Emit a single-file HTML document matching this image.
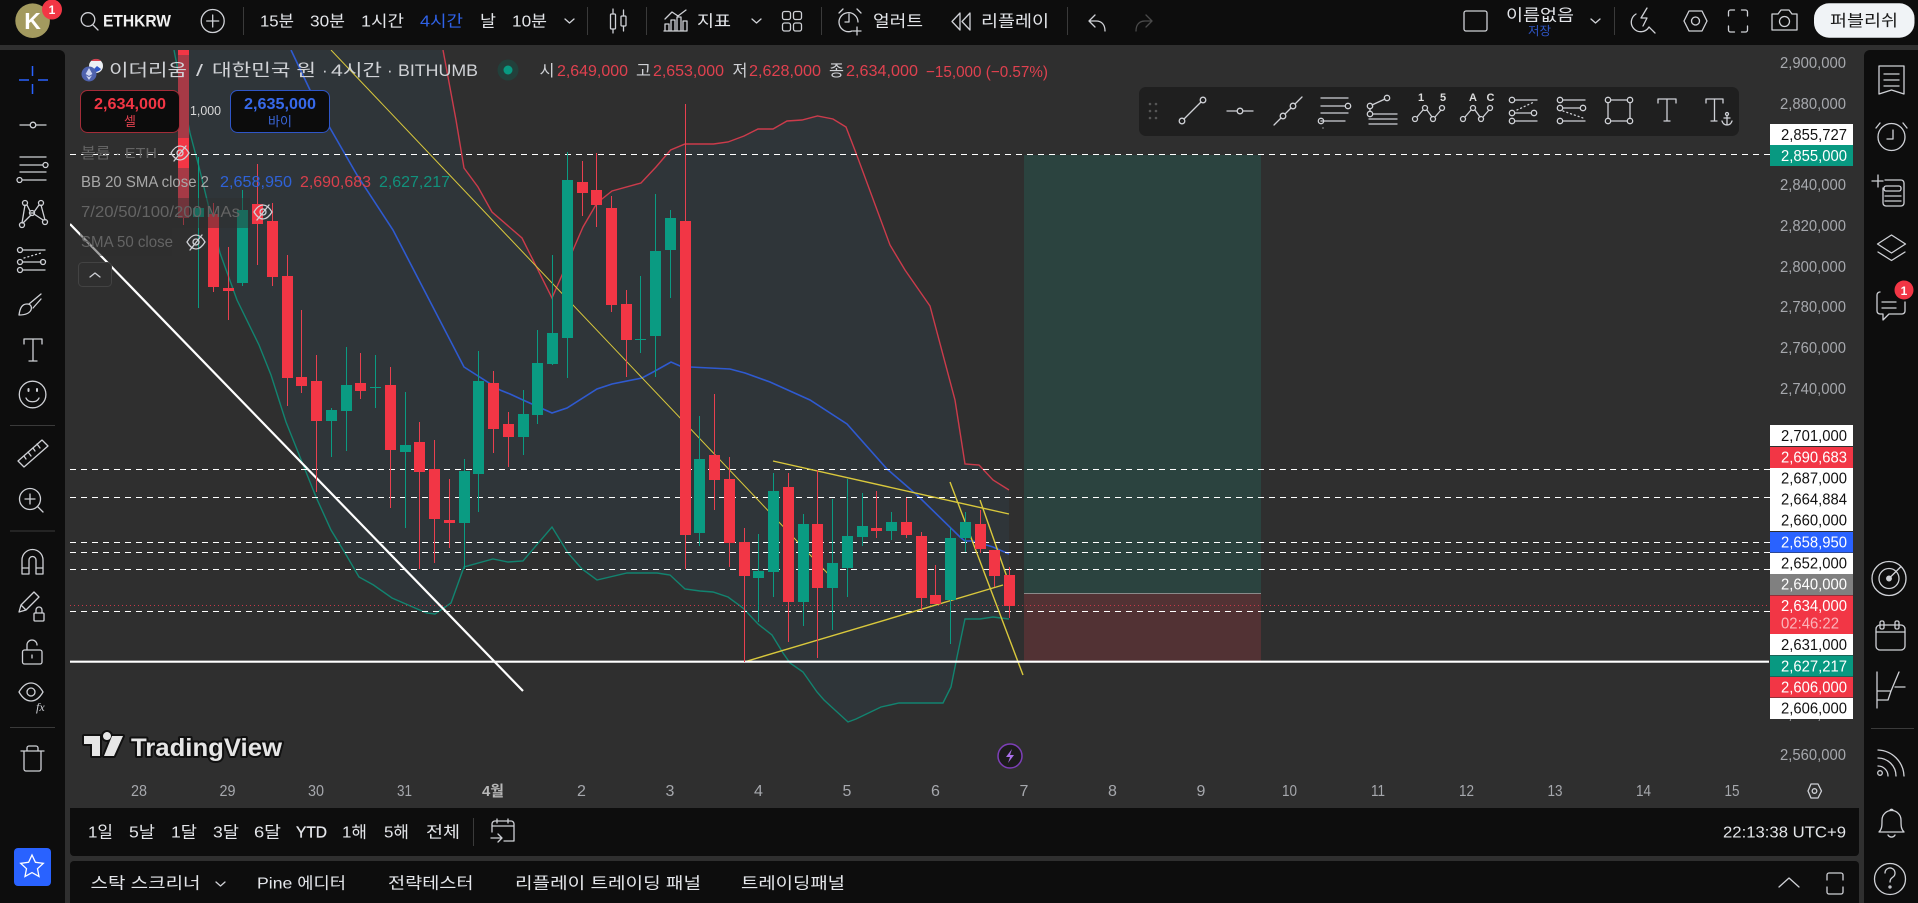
<!DOCTYPE html>
<html lang="ko"><head><meta charset="utf-8"><title>ETHKRW</title>
<style>
html,body{margin:0;padding:0;background:#2f2f2f;width:1918px;height:903px;overflow:hidden}
svg{display:block}
text{font-family:"Liberation Sans","Noto Sans CJK KR",sans-serif;white-space:pre}
.i{fill:none;stroke:#cfd1d6;stroke-width:1.3;stroke-linecap:round;stroke-linejoin:round}
.t{fill:#e4e6ea;font-size:16px}
.ax{fill:#a6a8ad;font-size:16px}
.lb{font-size:16px}
.d{stroke:#fff;stroke-width:1;stroke-dasharray:6 5;fill:none}
</style></head><body>
<svg width="1918" height="903" viewBox="0 0 1918 903" xmlns="http://www.w3.org/2000/svg">
<rect width="1918" height="903" fill="#2f2f2f"/>
<!-- position tool -->
<rect x="1024" y="155" width="237" height="438" fill="#2b433f"/>
<rect x="1024" y="593" width="237" height="68" fill="#523234"/>
<path d="M1024 593.5H1261" stroke="#8a8a8a"/>
<!-- BB fill -->
<clipPath id="cp"><rect x="70" y="50" width="1700" height="758"/></clipPath>
<g clip-path="url(#cp)">
<path fill="#2f3539" d="M174 50L443 50L456 120L464 168L478 187L492 212L522 238L552 298L573 250L583 227L597 203L612 191L641 183L656 167L670.6 150L685 144L713.5 144L728 142L744 136L758 129L773 129L787 121L802 120L817.5 116L833 119L846 127L856 153L890 245L905 270L930 306L955 400L965 464L979 465L993 480L1009 490L1009 619L993 617L980 619L965 619L957 657L951 687L943 703L899 703L881 707L856 719L848 722L824 700L817 692L803 672L790 663L783 653L772 635L758 624L743 608L728 597L713 592L700 591L685 589L670 575L657 573L627 573L597 580L582 569L568 553L552 527L523 561L508 562L493 559L464 567L451 603L435 614L426.5 613L392 598L373.5 585L359 577L345 553L331 530L316 497L286 422L271 375L259 345L237 300L220 253L199 167L190 133Z"/>
<!-- BB lines -->
<path fill="none" stroke="#cc3b4b" stroke-width="1.4" d="M443 50L456 120L464 168L478 187L492 212L522 238L552 298L573 250L583 227L597 203L612 191L641 183L656 167L670.6 150L685 144L713.5 144L728 142L744 136L758 129L773 129L787 121L802 120L817.5 116L833 119L846 127L856 153L890 245L905 270L930 306L955 400L965 464L979 465L993 480L1009 490"/>
<path fill="none" stroke="#2f5ad0" stroke-width="1.6" d="M291 50L310 90L330 128L357 175L393 230L464 367L500 390L510 394L523 400L552 413L567 408L597 389L612 384L642 378L655 371L671 362L680 366L690 367L730 369L745 373L770 382L790 391L810 400L847 424L887 469L917 495L960 537L965 541L973 541L993 547L1009 554"/>
<path fill="none" stroke="#128470" stroke-width="1.4" d="M174 50L190 133L199 167L220 253L237 300L259 345L271 375L286 422L316 497L331 530L345 553L359 577L373.5 585L392 598L426.5 613L435 614L451 603L464 567L493 559L508 562L523 561L552 527L568 553L582 569L597 580L627 573L640 573L657 573L670 575L685 589L700 591L713 592L728 597L743 608L758 624L772 635L783 653L790 663L803 672L817 692L824 700L848 722L856 719L881 707L899 703L943 703L951 687L957 657L965 619L980 619L993 617L1009 619"/>
<!-- dashes -->
<path class="d" d="M70 154.5H1770M70 469.5H1770M70 497.5H1770M70 542.5H1770M70 552.5H1770M70 569.5H1770M70 611.5H1770"/>
<path d="M70 605.5H1770" stroke="#c8394a" stroke-dasharray="1 3" fill="none"/>
<!-- yellow -->
<path fill="none" stroke="#d9c83c" stroke-width="1" d="M331 50L832 578"/>
<path fill="none" stroke="#d9c83c" stroke-width="1.4" d="M773 461L1009 514M744 662L1003 585M950 482L1023 675M980 500L1008 580"/>
<!-- white -->
<path fill="none" stroke="#fff" stroke-width="2.2" d="M70 224L523 691"/>
<path fill="none" stroke="#fff" stroke-width="2.2" d="M70 661.7H1769"/>
<!-- candles -->
<path fill="none" stroke="#0a9b82" d="M198.5 157V308M242.5 190V286M331.5 408V457M346.5 347V451M375.5 355V408M405.5 392V528M464.5 459V569M478.5 351V512M523.5 390V455M537.5 330V424M552.5 255V365M567.5 152V378M640.5 276V353M655.5 194V377M670.5 210V298M699.5 416V546M758.5 534V622M773.5 473V597M803.5 514V626M832.5 499V630M847.5 479V597M862.5 493V546M891.5 512V540M950.5 528V644M965.5 512V552"/>
<path fill="none" stroke="#e8404f" d="M213.5 203V292M228.5 247V320M257.5 164V265M272.5 203V286M287.5 255V406M301.5 310V393M316.5 355V492M360.5 353V399M390.5 367V508M419.5 422V569M434.5 440V563M449.5 479V548M493.5 371V453M508.5 412V467M582.5 161V216M596.5 153V227M611.5 196V312M626.5 290V377M685.5 104V569M714.5 394V510M729.5 457V567M744.5 528V662M788.5 473V642M817.5 470V658M876.5 491V538M906.5 498V538M921.5 532V611M935.5 565V604M980.5 510V553M994.5 550V587M1009.5 567V618M183.5 50V225"/>
<path fill="#0a9b82" d="M193 208h11v9h-11zM237 210h11v73h-11zM326 410h11v11h-11zM341 385h11v26h-11zM370 387h11v1h-11zM400 445h11v7h-11zM459 471h11v52h-11zM473 381h11v93h-11zM518 414h11v23h-11zM532 363h11v52h-11zM547 333h11v31h-11zM562 180h11v158h-11zM635 339h11v1h-11zM650 251h11v85h-11zM665 218h11v32h-11zM694 459h11v74h-11zM753 571h11v7h-11zM768 491h11v81h-11zM798 524h11v78h-11zM827 563h11v25h-11zM842 536h11v32h-11zM857 526h11v11h-11zM886 522h11v9h-11zM945 538h11v62h-11zM960 522h11v16h-11z"/>
<path fill="#f23645" d="M208 214h11v73h-11zM223 288h11v3h-11zM252 204h11v20h-11zM267 221h11v56h-11zM282 276h11v102h-11zM296 377h11v9h-11zM311 381h11v40h-11zM355 383h11v8h-11zM385 385h11v65h-11zM414 442h11v30h-11zM429 469h11v50h-11zM444 520h11v3h-11zM488 383h11v46h-11zM503 424h11v13h-11zM577 182h11v11h-11zM591 190h11v15h-11zM606 208h11v97h-11zM621 304h11v36h-11zM680 221h11v314h-11zM709 455h11v25h-11zM724 479h11v64h-11zM739 542h11v34h-11zM783 487h11v115h-11zM812 524h11v64h-11zM871 528h11v3h-11zM901 522h11v13h-11zM916 536h11v62h-11zM930 595h11v9h-11zM975 524h11v25h-11zM989 550h11v26h-11zM1004 575h11v31h-11z"/>
<rect x="178" y="50" width="11" height="168" fill="#a63a46"/>
<rect x="178" y="50" width="11" height="5" fill="#f23645"/>
<rect x="178" y="138" width="11" height="30" fill="#f23645"/>
<rect x="80" y="198" width="170" height="30" fill="#2f2f2f" opacity=".45"/>
<rect x="80" y="228" width="92" height="28" fill="#2f2f2f" opacity=".45"/>
</g>
<!-- legend -->
<circle cx="96" cy="66" r="7" fill="#eceff4"/><path d="M91 61a7 7 0 0 1 10 0z" fill="#d64150"/><path d="M92 71a7 7 0 0 0 9-2l-4-3z" fill="#2f56c8"/>
<circle cx="89" cy="74" r="7.5" fill="#4f62ad"/><path d="M89 68l-3.4 6 3.4 2 3.4-2zM89 77l-3 -1.500 3 4.500 3-4.500z" fill="#cfd6f2"/>
<g fill="#d0d2d6" font-size="17">
<text x="109" y="76" textLength="78" lengthAdjust="spacingAndGlyphs">이더리움</text>
<text x="196" y="76" textLength="7" lengthAdjust="spacingAndGlyphs">/</text>
<text x="212" y="76" textLength="104" lengthAdjust="spacingAndGlyphs">대한민국 원</text>
<text x="322" y="76">·</text>
<text x="331" y="76" textLength="51" lengthAdjust="spacingAndGlyphs">4시간</text>
<text x="387" y="76">·</text>
<text x="398" y="76" textLength="80" lengthAdjust="spacingAndGlyphs">BITHUMB</text>
</g>
<circle cx="508" cy="70" r="10.500" fill="#22403b"/><circle cx="508" cy="70" r="4.500" fill="#089981"/>
<g font-size="16" fill="#e0414f">
<text x="539.500" y="76" fill="#cfd1d5" textLength="15" lengthAdjust="spacingAndGlyphs">시</text>
<text x="557" y="76" textLength="71" lengthAdjust="spacingAndGlyphs">2,649,000</text>
<text x="636" y="76" fill="#cfd1d5" textLength="15" lengthAdjust="spacingAndGlyphs">고</text>
<text x="653" y="76" textLength="71" lengthAdjust="spacingAndGlyphs">2,653,000</text>
<text x="732.500" y="76" fill="#cfd1d5" textLength="15" lengthAdjust="spacingAndGlyphs">저</text>
<text x="749" y="76" textLength="72" lengthAdjust="spacingAndGlyphs">2,628,000</text>
<text x="829" y="76" fill="#cfd1d5" textLength="15" lengthAdjust="spacingAndGlyphs">종</text>
<text x="846" y="76" textLength="72" lengthAdjust="spacingAndGlyphs">2,634,000</text>
<text x="926" y="77" textLength="122" lengthAdjust="spacingAndGlyphs">−15,000 (−0.57%)</text>
</g>
<rect x="80.500" y="90.500" width="99" height="42" rx="7" fill="#0c0c0c" stroke="#a32c38"/>
<text x="94" y="109" fill="#f23645" font-size="16" font-weight="700" textLength="72" lengthAdjust="spacingAndGlyphs">2,634,000</text>
<text x="130" y="126" fill="#e0404e" font-size="13" text-anchor="middle">셀</text>
<text x="190" y="115" fill="#d8d8d8" font-size="13" textLength="31" lengthAdjust="spacingAndGlyphs">1,000</text>
<rect x="230.500" y="90.500" width="99" height="42" rx="7" fill="#0c0c0c" stroke="#2f56c8"/>
<text x="244" y="109" fill="#3769ea" font-size="16" font-weight="700" textLength="72" lengthAdjust="spacingAndGlyphs">2,635,000</text>
<text x="280" y="126" fill="#3a66d8" font-size="13" text-anchor="middle">바이</text>
<text x="81" y="158" fill="#646464" font-size="15" textLength="76" lengthAdjust="spacingAndGlyphs">볼륨 · ETH</text>
<text x="81" y="187" fill="#a8a8a8" font-size="16" textLength="128" lengthAdjust="spacingAndGlyphs">BB 20 SMA close 2</text>
<text x="220" y="187" fill="#2f62d8" font-size="16" textLength="72" lengthAdjust="spacingAndGlyphs">2,658,950</text>
<text x="300" y="187" fill="#d8404c" font-size="16" textLength="71" lengthAdjust="spacingAndGlyphs">2,690,683</text>
<text x="379" y="187" fill="#11917c" font-size="16" textLength="71" lengthAdjust="spacingAndGlyphs">2,627,217</text>
<text x="81" y="217" fill="#646464" font-size="16" textLength="159" lengthAdjust="spacingAndGlyphs">7/20/50/100/200 MAs</text>
<text x="81" y="247" fill="#646464" font-size="16" textLength="92" lengthAdjust="spacingAndGlyphs">SMA 50 close</text>
<g class="i" stroke="#e4e4e4">
<g><path d="M171 153c3-5 6-7 9-7s6 2 9 7c-3 5-6 7-9 7s-6-2-9-7z"/><circle cx="180" cy="153" r="3"/><path d="M174 161l12-15"/></g>
<path d="M254 212c3-5 6-7 9-7s6 2 9 7c-3 5-6 7-9 7s-6-2-9-7zM257 220l12-15"/><circle cx="263" cy="212" r="3"/>
<path d="M187 242c3-5 6-7 9-7s6 2 9 7c-3 5-6 7-9 7s-6-2-9-7zM190 250l12-15"/><circle cx="196" cy="242" r="3"/>
</g>
<rect x="78.500" y="262.500" width="33" height="24" rx="4" fill="#2f2f2f" stroke="#434343"/>
<path class="i" d="M90 277l5-4 5 4"/>
<!-- floating tools -->
<rect x="1139" y="87" width="600" height="49" rx="7" fill="#1f1f1f"/>
<g fill="#555"><circle cx="1150" cy="104" r="1.300"/><circle cx="1156" cy="104" r="1.300"/><circle cx="1150" cy="111" r="1.300"/><circle cx="1156" cy="111" r="1.300"/><circle cx="1150" cy="118" r="1.300"/><circle cx="1156" cy="118" r="1.300"/></g>
<g class="i">
<circle cx="1182" cy="121" r="2.800"/><circle cx="1203" cy="100" r="2.800"/><path d="M1184 119l17-17"/>
<circle cx="1240" cy="111" r="2.800"/><path d="M1227 111h10M1243 111h10"/>
<circle cx="1283" cy="116" r="2.800"/><circle cx="1293" cy="106" r="2.800"/><path d="M1274 125l7-7M1285 114l6-6M1295 104l7-7"/>
<path d="M1321 98h27M1321 106h24M1321 113h27M1321 121h24M1323 128h0"/><circle cx="1348" cy="106" r="2.700"/><circle cx="1321" cy="121" r="2.700"/>
<circle cx="1370" cy="106" r="2.700"/><circle cx="1387" cy="98" r="2.700"/><circle cx="1370" cy="114" r="2.700"/><path d="M1372 105l13-6M1370 109v2M1373 114h24M1369 119h28M1369 124h28"/>
<circle cx="1415" cy="119" r="2.500"/><circle cx="1425" cy="108" r="2.500"/><circle cx="1433" cy="119" r="2.500"/><circle cx="1442" cy="108" r="2.500"/><path d="M1417 117l6-7M1427 110l5 7M1435 117l6-7"/>
<circle cx="1463" cy="119" r="2.500"/><circle cx="1473" cy="108" r="2.500"/><circle cx="1481" cy="119" r="2.500"/><circle cx="1490" cy="108" r="2.500"/><path d="M1465 117l6-7M1475 110l5 7M1483 117l6-7"/>
<circle cx="1512" cy="100" r="2.700"/><circle cx="1512" cy="113" r="2.700"/><circle cx="1534" cy="113" r="2.700"/><circle cx="1512" cy="121" r="2.700"/><path d="M1515 100h22M1515 113h16M1515 121h22"/><path d="M1517 110l17-8" stroke-dasharray="1 3"/>
<circle cx="1560" cy="100" r="2.700"/><circle cx="1560" cy="108" r="2.700"/><circle cx="1583" cy="108" r="2.700"/><circle cx="1560" cy="121" r="2.700"/><path d="M1563 100h22M1563 108h17M1563 121h22"/><path d="M1563 111l20 7" stroke-dasharray="1 3"/>
<path d="M1609 100h20M1609 121h20M1608 100v21M1630 100v21" /><circle cx="1608" cy="100" r="2.700" fill="#1f1f1f"/><circle cx="1630" cy="100" r="2.700" fill="#1f1f1f"/><circle cx="1608" cy="121" r="2.700" fill="#1f1f1f"/><circle cx="1630" cy="121" r="2.700" fill="#1f1f1f"/>
<path d="M1658 103v-4h18v4M1667 99v22M1664 121h6"/>
<path d="M1706 103v-4h17v4M1714.500 99v22M1711 121h6"/><circle cx="1727" cy="114" r="1.500"/><path d="M1727 116v9M1724 118h6M1722 121c1 3 3 4 5 4s4-1 5-4"/>
</g>
<g fill="#dcdcdc" font-size="11" font-weight="700"><text x="1421" y="101" text-anchor="middle">1</text><text x="1443" y="101" text-anchor="middle">5</text><text x="1473" y="101" text-anchor="middle">A</text><text x="1490.500" y="101" text-anchor="middle">C</text></g>
<!-- price axis -->
<g class="ax">
<text x="1780" y="68" textLength="66" lengthAdjust="spacingAndGlyphs">2,900,000</text>
<text x="1780" y="109" textLength="66" lengthAdjust="spacingAndGlyphs">2,880,000</text>
<text x="1780" y="190" textLength="66" lengthAdjust="spacingAndGlyphs">2,840,000</text>
<text x="1780" y="231" textLength="66" lengthAdjust="spacingAndGlyphs">2,820,000</text>
<text x="1780" y="272" textLength="66" lengthAdjust="spacingAndGlyphs">2,800,000</text>
<text x="1780" y="312" textLength="66" lengthAdjust="spacingAndGlyphs">2,780,000</text>
<text x="1780" y="353" textLength="66" lengthAdjust="spacingAndGlyphs">2,760,000</text>
<text x="1780" y="394" textLength="66" lengthAdjust="spacingAndGlyphs">2,740,000</text>
<text x="1780" y="719" textLength="66" lengthAdjust="spacingAndGlyphs">2,580,000</text>
<text x="1780" y="760" textLength="66" lengthAdjust="spacingAndGlyphs">2,560,000</text>
</g>
<!-- labels -->
<g>
<rect x="1770" y="124" width="83" height="21" fill="#fff"/><rect x="1770" y="145" width="83" height="21" fill="#089981"/>
<rect x="1770" y="425" width="83" height="21" fill="#fff"/><rect x="1770" y="447" width="83" height="21" fill="#f23645"/>
<rect x="1770" y="468" width="83" height="63" fill="#fff"/><rect x="1770" y="532" width="83" height="20.500" fill="#2962ff"/>
<rect x="1770" y="553" width="83" height="21" fill="#fff"/><rect x="1770" y="574" width="83" height="21" fill="#808080"/>
<rect x="1770" y="595.500" width="83" height="38.500" fill="#f23645"/><rect x="1770" y="634" width="83" height="21" fill="#fff"/>
<rect x="1770" y="655.500" width="83" height="21" fill="#089981"/><rect x="1770" y="677" width="83" height="20.500" fill="#f23645"/>
<rect x="1770" y="698" width="83" height="21" fill="#fff"/>
</g>
<g class="lb">
<text x="1781" y="140" fill="#111" textLength="66" lengthAdjust="spacingAndGlyphs">2,855,727</text>
<text x="1781" y="161" fill="#fff" textLength="66" lengthAdjust="spacingAndGlyphs">2,855,000</text>
<text x="1781" y="441" fill="#111" textLength="66" lengthAdjust="spacingAndGlyphs">2,701,000</text>
<text x="1781" y="462.500" fill="#fff" textLength="66" lengthAdjust="spacingAndGlyphs">2,690,683</text>
<text x="1781" y="483.500" fill="#111" textLength="66" lengthAdjust="spacingAndGlyphs">2,687,000</text>
<text x="1781" y="504.500" fill="#111" textLength="66" lengthAdjust="spacingAndGlyphs">2,664,884</text>
<text x="1781" y="525.500" fill="#111" textLength="66" lengthAdjust="spacingAndGlyphs">2,660,000</text>
<text x="1781" y="547.500" fill="#fff" textLength="66" lengthAdjust="spacingAndGlyphs">2,658,950</text>
<text x="1781" y="568.500" fill="#111" textLength="66" lengthAdjust="spacingAndGlyphs">2,652,000</text>
<text x="1781" y="589.500" fill="#fff" textLength="66" lengthAdjust="spacingAndGlyphs">2,640,000</text>
<text x="1781" y="611" fill="#fff" textLength="66" lengthAdjust="spacingAndGlyphs">2,634,000</text>
<text x="1781" y="628.500" fill="#fbb4ba" textLength="58" lengthAdjust="spacingAndGlyphs">02:46:22</text>
<text x="1781" y="650" fill="#111" textLength="66" lengthAdjust="spacingAndGlyphs">2,631,000</text>
<text x="1781" y="671.500" fill="#fff" textLength="66" lengthAdjust="spacingAndGlyphs">2,627,217</text>
<text x="1781" y="692.500" fill="#fff" textLength="66" lengthAdjust="spacingAndGlyphs">2,606,000</text>
<text x="1781" y="713.500" fill="#111" textLength="66" lengthAdjust="spacingAndGlyphs">2,606,000</text>
</g>
<!-- time axis -->
<g class="ax" text-anchor="middle">
<text x="139" y="796" textLength="16" lengthAdjust="spacingAndGlyphs">28</text><text x="227.500" y="796" textLength="16" lengthAdjust="spacingAndGlyphs">29</text><text x="316" y="796" textLength="16" lengthAdjust="spacingAndGlyphs">30</text><text x="404.500" y="796" textLength="15" lengthAdjust="spacingAndGlyphs">31</text><text x="493" y="796" fill="#b8b8b8" font-size="15" textLength="22" lengthAdjust="spacingAndGlyphs" font-weight="700">4월</text><text x="581.500" y="796">2</text><text x="670" y="796">3</text><text x="758.500" y="796">4</text><text x="847" y="796">5</text><text x="935.500" y="796">6</text><text x="1024" y="796">7</text><text x="1112.500" y="796">8</text><text x="1201" y="796">9</text><text x="1289.500" y="796" textLength="15" lengthAdjust="spacingAndGlyphs">10</text><text x="1378" y="796" textLength="14" lengthAdjust="spacingAndGlyphs">11</text><text x="1466.500" y="796" textLength="15" lengthAdjust="spacingAndGlyphs">12</text><text x="1555" y="796" textLength="15" lengthAdjust="spacingAndGlyphs">13</text><text x="1643.500" y="796" textLength="15" lengthAdjust="spacingAndGlyphs">14</text><text x="1732" y="796" textLength="15" lengthAdjust="spacingAndGlyphs">15</text>
</g>
<path class="i" d="M1808 791l3-7h7l3.500 7-3.500 7h-7z"/><circle class="i" cx="1814.500" cy="791" r="2.300"/>
<!-- TV logo -->
<g stroke="#111" stroke-width="4" paint-order="stroke" fill="#e6e6e6" stroke-linejoin="round">
<path d="M84 736h16v20h-8v-12h-8zM103 736a4 4 0 1 1 0 .1zM112 736h11l-9 20h-10z"/>
<text x="131" y="756" font-size="25" font-weight="700" textLength="151" lengthAdjust="spacingAndGlyphs">TradingView</text>
</g>
<!-- lightning bubble -->
<circle cx="1010" cy="756" r="12" fill="#1c1c1c" stroke="#7d3fb8" stroke-width="1.500"/><path d="M1012 749l-6 8h4l-2 6 6-8h-4z" fill="#a970e8"/>
<!-- top bar -->
<rect width="1918" height="45" fill="#0d0d0d"/>
<circle cx="32.600" cy="20.700" r="17.300" fill="#a39a5f"/><text x="32.600" y="29" fill="#fff" font-size="23" font-weight="700" text-anchor="middle">K</text>
<circle cx="52" cy="9.500" r="10" fill="#f23645"/><text x="52" y="14" fill="#fff" font-size="12" font-weight="700" text-anchor="middle">1</text>
<g class="i" stroke-width="1.500"><circle cx="88" cy="19.500" r="6.800"/><path d="M93 25l5 5"/></g>
<text x="103" y="26.500" fill="#f0f0f0" font-size="16.500" font-weight="700" textLength="68" lengthAdjust="spacingAndGlyphs">ETHKRW</text>
<g class="i"><circle cx="212.700" cy="21" r="11.500"/><path d="M212.700 15v12M206.700 21h12"/></g>
<g stroke="#3a3a3a"><path d="M243.500 7V35M587.500 7V35M646.500 7V35M821.500 7V35M1067.500 7V35M1614.500 7V35"/></g>
<g class="t">
<text x="260" y="26.500" textLength="34" lengthAdjust="spacingAndGlyphs">15분</text>
<text x="310" y="26.500" textLength="35" lengthAdjust="spacingAndGlyphs">30분</text>
<text x="361" y="26.500" textLength="43" lengthAdjust="spacingAndGlyphs">1시간</text>
<text x="420" y="26.500" fill="#2f62e8" textLength="43" lengthAdjust="spacingAndGlyphs">4시간</text>
<text x="480" y="26.500" textLength="16" lengthAdjust="spacingAndGlyphs">날</text>
<text x="512" y="26.500" textLength="35" lengthAdjust="spacingAndGlyphs">10분</text>
<text x="697" y="26.500" textLength="34" lengthAdjust="spacingAndGlyphs">지표</text>
<text x="873" y="26.500" textLength="50" lengthAdjust="spacingAndGlyphs">얼러트</text>
<text x="981" y="26.500" textLength="68" lengthAdjust="spacingAndGlyphs">리플레이</text>
<text x="1506" y="20.500" font-size="16" textLength="68" lengthAdjust="spacingAndGlyphs">이름없음</text>
</g>
<text x="1528" y="35" fill="#2f56c8" font-size="12" textLength="23" lengthAdjust="spacingAndGlyphs">저장</text>
<g class="i">
<path d="M565 19l4.500 4 4.500-4M752 19l4.500 4 4.500-4M1591 19l4.500 4 4.500-4"/>
<rect x="610.500" y="14" width="5" height="15" rx="1"/><path d="M613 9v5M613 29v4"/><rect x="621" y="16" width="5" height="10" rx="1"/><path d="M623.500 10v6M623.500 26v5"/>
<path d="M665 31v-7h4v7zM671 31v-11h4v11zM677 31v-14h4v14zM683 31v-10h4v10zM664 31h23M665 19l7-7 6 4 8-6"/>
<rect x="782.500" y="11.500" width="8" height="8" rx="2"/><rect x="793.500" y="11.500" width="8" height="8" rx="2"/><rect x="782.500" y="23" width="8" height="8" rx="2"/><rect x="793.500" y="23" width="8" height="8" rx="2"/>
<path d="M858 22a9.500 9.500 0 1 0-6 9M849 14v8h-4M839 13l4-4M857 9l4 4M857 27v8M853 31h8"/>
<path d="M960 13l-8 8.500 8 8.500zM970 13l-8 8.500 8 8.500z"/>
<path d="M1105 31c0-6-3-10-9-10h-6M1095 15l-6 6 6 6"/>
<rect x="1464" y="11" width="23" height="20" rx="2"/>
<path d="M1636 14a9.500 9.500 0 1 0 13 13M1647 8l-6 10h6l-4 8M1649 27l6 6"/>
<path d="M1684 21l5-10h13l5 10-5 10h-13z"/><circle cx="1695.500" cy="21" r="4"/>
<path d="M1728.500 16v-4a2 2 0 0 1 2-2h4M1741.500 10h4a2 2 0 0 1 2 2v4M1747.500 26v4a2 2 0 0 1-2 2h-4M1734.500 32h-4a2 2 0 0 1-2-2v-4"/>
<path d="M1772 14h6l3-4h8l3 4h5v16h-25z"/><circle cx="1784.500" cy="21.500" r="5"/>
</g>
<path d="M1151 31c0-6-3-10-9-10h-6M1141 15l-6 6 6 6" transform="matrix(-1 0 0 1 2287 0)" class="i" style="stroke:#4a4a4a"/>
<rect x="1814" y="3.300" width="100.500" height="34.400" rx="15" fill="#f0f3f6"/>
<text x="1830" y="26" fill="#1a1a1a" font-size="16" textLength="68" lengthAdjust="spacingAndGlyphs">퍼블리쉬</text>
<!-- left bar -->
<path d="M0 50H59a6 6 0 0 1 6 6V903H0z" fill="#0d0d0d"/>
<path d="M32.500 66v10M32.500 84v10M19 80h10M38 80h10" fill="none" stroke="#2962ff" stroke-width="1.500"/>
<g class="i">
<circle cx="33" cy="125" r="2.800"/><path d="M20 125h10M36 125h10"/>
<path d="M20 157h26M20 165h23M20 172h26M23 180h23"/><circle cx="45.500" cy="165" r="2.500"/><circle cx="19.500" cy="180" r="2.500"/>
<circle cx="25" cy="203" r="2.500"/><circle cx="41" cy="203" r="2.500"/><circle cx="22" cy="225" r="2.500"/><circle cx="45" cy="222" r="2.500"/><circle cx="32" cy="213" r="2.500"/><path d="M25 205l-3 18M41 205l4 15M27 205l3 6M39 205l-5 7M23 223l8-8M43 220l-9-6M30 213h4"/>
<circle cx="20" cy="250" r="2.500"/><circle cx="20" cy="262" r="2.500"/><circle cx="43" cy="262" r="2.500"/><circle cx="20" cy="270" r="2.500"/><path d="M23 250h22M23 262h18M23 270h22"/><path d="M24 258l17-5" stroke-dasharray="1 3"/>
<path d="M19 315c1-7 3-11 8-11 4 0 5 3 4 6-2 4-7 5-12 5zM29 304l12-10M33 308l8-9"/>
<path d="M24 344v-5h18v5M33 339v22M29 361h8"/>
<circle cx="32.600" cy="394.500" r="13.300"/><path d="M26 398c2 5 11 5 13 0"/><path d="M28.500 389v2M37 389v2" stroke-width="2"/>
<path d="M18 461l24-21 6 6-24 21zM24 456l2 3M28 452l3 4M33 448l2 3M37 444l3 4"/>
<circle cx="30" cy="499" r="10.500"/><path d="M30 494v10M25 499h10M38 507l5 5"/>
<path d="M22 574v-14a10.500 10.500 0 0 1 21 0v14h-7v-14a3.500 3.500 0 0 0-7 0v14zM22 568h7M36 568h7"/>
<path d="M19 612l2-7 13-13 5 5-13 13zM21 605l5 5"/><rect x="34" y="613" width="10" height="8" rx="1"/><path d="M36 613v-3a3 3 0 0 1 6 0v3"/>
<rect x="22.500" y="650" width="19.500" height="14" rx="2"/><path d="M27 650v-5a5 5 0 0 1 10 0M32 655v3"/>
<path d="M19 692c4-7 8-9 12-9s8 2 12 9c-4 7-8 9-12 9s-8-2-12-9z"/><circle cx="31" cy="692" r="4"/>
<path d="M21 751h23M27 751v-3a2 2 0 0 1 2-2h7a2 2 0 0 1 2 2v3M24 751v18a2 2 0 0 0 2 2h13a2 2 0 0 0 2-2v-18"/>
</g>
<text x="36" y="711" fill="#cfd1d6" font-size="12" font-style="italic" style="font-family:'Liberation Serif',serif">fx</text>
<path d="M10 425.500h45M10 531h45M10 727.500h45" stroke="#3a3a3a"/>
<rect x="14" y="848" width="37" height="38" rx="4" fill="#2962ff"/>
<path d="M32 855l3.400 7.300 7.900 1-5.800 5.400 1.500 7.800-7-3.900-7 3.900 1.500-7.800-5.800-5.400 7.900-1z" fill="none" stroke="#fff" stroke-width="1.300"/>
<!-- right bar -->
<path d="M1918 50H1870a6 6 0 0 0-6 6V903h54z" fill="#0d0d0d"/>
<g class="i" transform="translate(-2 0)">
<path d="M1881 66h25v28l-12.500-4-12.500 4zM1886 74h15M1886 80h15M1886 86h15"/>
<circle cx="1893.500" cy="137" r="13.500"/><path d="M1895 130v9h-6M1878 128l4-5M1905 123l4 5"/>
<path d="M1880 175v12M1874 181h11M1887 180h16a3 3 0 0 1 3 3v20a3 3 0 0 1-3 3h-15a3 3 0 0 1-3-3v-15"/><rect x="1886" y="186" width="17" height="5" rx="2"/><path d="M1887 196h16M1887 201h16"/>
<path d="M1893.500 235l14 9-14 9-14-9zM1880 252l13.500 8.500 13.500-8.500"/>
<path d="M1882 292a3 3 0 0 0-3 3v16a3 3 0 0 0 3 3h3v6l6-6h13a3 3 0 0 0 3-3v-9M1884 302h14M1884 308h14"/>
<circle cx="1891" cy="578.500" r="17"/><circle cx="1891" cy="578.500" r="10"/><path d="M1891 578.500l12-12"/><circle cx="1891" cy="578.500" r="2.300" fill="#cfd1d6"/>
<rect x="1878" y="625" width="29" height="25" rx="4"/><path d="M1878 632h29"/><rect x="1882" y="621" width="4" height="8" rx="1.500"/><rect x="1897" y="621" width="4" height="8" rx="1.500"/>
<path d="M1879 672v36M1879 691h13M1879 700h11l3-9 8-19M1897 687h10"/>
<path d="M1880 750a27 27 0 0 1 26 26M1880 758a18 18 0 0 1 18 18M1880 766a10 10 0 0 1 10 10"/><circle cx="1882" cy="773" r="2.300"/>
<path d="M1881 832c3-3 3-6 3-12a9.500 9.500 0 0 1 19 0c0 6 0 9 3 12zM1890 835a4 4 0 0 0 7 0M1892 810a2 2 0 0 1 3 0"/>
<circle cx="1892" cy="879" r="15.500"/><path d="M1887 873a5 5 0 1 1 8 4c-2 1.500-3 2.500-3 5"/><circle cx="1892" cy="887" r="1"/>
</g>
<circle cx="1904" cy="290" r="9.500" fill="#f23645"/><text x="1904" y="295" fill="#fff" font-size="12" font-weight="700" text-anchor="middle">1</text>
<path d="M1871 728.500h43" stroke="#3a3a3a"/>
<!-- bottom bar -->
<path d="M70 808H1859V852a4 4 0 0 1-4 4H74a4 4 0 0 1-4-4z" fill="#0d0d0d"/>
<path d="M74 861H1855a4 4 0 0 1 4 4V903H70V865a4 4 0 0 1 4-4z" fill="#0d0d0d"/>
<g class="t" font-size="16">
<text x="88" y="837.500" textLength="25" lengthAdjust="spacingAndGlyphs">1일</text>
<text x="129" y="837.500" textLength="26" lengthAdjust="spacingAndGlyphs">5날</text>
<text x="171" y="837.500" textLength="26" lengthAdjust="spacingAndGlyphs">1달</text>
<text x="213" y="837.500" textLength="26" lengthAdjust="spacingAndGlyphs">3달</text>
<text x="254" y="837.500" textLength="27" lengthAdjust="spacingAndGlyphs">6달</text>
<text x="296" y="837.500" stroke="#e4e6ea" stroke-width=".3" textLength="31" lengthAdjust="spacingAndGlyphs">YTD</text>
<text x="342" y="837.500" textLength="25" lengthAdjust="spacingAndGlyphs">1해</text>
<text x="384" y="837.500" textLength="25" lengthAdjust="spacingAndGlyphs">5해</text>
<text x="426" y="837.500" textLength="34" lengthAdjust="spacingAndGlyphs">전체</text>
<text x="1723" y="837.500" textLength="123" lengthAdjust="spacingAndGlyphs">22:13:38 UTC+9</text>
<text x="90.500" y="888.500" textLength="110" lengthAdjust="spacingAndGlyphs">스탁 스크리너</text>
<text x="257" y="888.500" textLength="89" lengthAdjust="spacingAndGlyphs">Pine 에디터</text>
<text x="388" y="888.500" textLength="85.500" lengthAdjust="spacingAndGlyphs">전략테스터</text>
<text x="515" y="888.500" textLength="186" lengthAdjust="spacingAndGlyphs">리플레이 트레이딩 패널</text>
<text x="741" y="888.500" textLength="104" lengthAdjust="spacingAndGlyphs">트레이딩패널</text>
</g>
<path d="M473.500 818V846" stroke="#3a3a3a"/>
<g class="i">
<path d="M492 832v-8a3 3 0 0 1 3-3h16a3 3 0 0 1 3 3v17h-10M492 826h22M497 819v4M508 819v4M491 838h11M498 834l4 4-4 4"/>
<path d="M216 882l4.500 4 4.500-4"/>
<path d="M1779 887l10-9 10 9"/>
<path d="M1827 880v-5a2 2 0 0 1 2-2h12a2 2 0 0 1 2 2v5M1843 887v5a2 2 0 0 1-2 2h-12a2 2 0 0 1-2-2v-5"/>
</g>
</svg>
</body></html>
